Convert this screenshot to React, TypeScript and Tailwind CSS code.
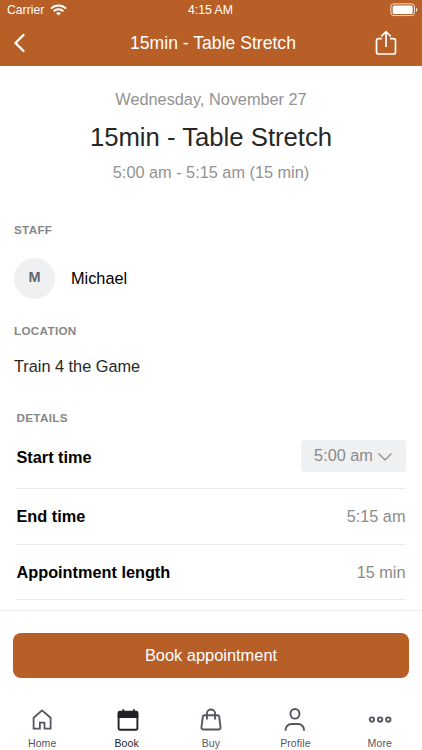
import type { ReactNode } from "react"

const details = [
  { label: "End time", value: "5:15 am" },
  { label: "Appointment length", value: "15 min" },
]

function WifiIcon() {
  return (
    <svg width="17" height="12" viewBox="0 0 17 12" fill="none" stroke="white" strokeWidth="2">
      <path d="M1 4.6C5 .4 12 .4 16 4.6" />
      <path d="M3.7 7.3C6.3 4.6 10.7 4.6 13.3 7.3" />
      <path d="M8.5 11.6 6 9.1c1.4-1.3 3.6-1.3 5 0z" fill="white" stroke="none" />
    </svg>
  )
}

function BatteryIcon() {
  return (
    <svg width="28" height="14" viewBox="0 0 28 14" fill="none">
      <rect x=".9" y=".8" width="23.6" height="11.8" rx="3" stroke="white" strokeOpacity=".8" />
      <rect x="2.7" y="2.5" width="20" height="8.4" rx="1.5" fill="white" />
      <path d="M26 4.5c1.8.8 1.8 3.8 0 4.6z" fill="white" fillOpacity=".8" />
    </svg>
  )
}

function ShareIcon() {
  return (
    <svg width="22" height="26" viewBox="0 0 22 26" fill="none" stroke="white" strokeWidth="1.7">
      <path d="M7 8.7H3.5a2 2 0 0 0-2 2V22a2 2 0 0 0 2 2h15a2 2 0 0 0 2-2V10.7a2 2 0 0 0-2-2H15" />
      <path d="M11 17V1.6M6.3 6.3 11 1.6l4.7 4.7" />
    </svg>
  )
}

function HomeIcon() {
  return (
    <svg width="24" height="26" viewBox="0 0 24 26" fill="none" stroke="#55555f" strokeWidth="1.8">
      <path d="M3.6 10.7 12 3.4l8.6 7.3v10.9h-6.100v-5.900h-4.600v5.900H3.600z" />
    </svg>
  )
}

function BookIcon() {
  return (
    <svg width="24" height="26" viewBox="0 0 24 26" fill="none">
      <rect x="3.6" y="5" width="18.8" height="17.8" rx="1.8" stroke="#222129" strokeWidth="1.9" />
      <path d="M2.700 11V6q0-2.200 2-2.200h16.600q2 0 2 2.200v5zM7.400 2.200h1.800V5H7.400zM18 2.200h1.800V5H18z" fill="#222129" />
    </svg>
  )
}

function BuyIcon() {
  return (
    <svg width="24" height="26" viewBox="0 0 24 26" fill="none" stroke="#55555f" strokeWidth="1.9">
      <path d="M5.500 8.300h13q1.500 0 1.700 1.400l1.300 10.400q.3 2.400-2 2.400h-15q-2.300 0-2-2.400L3.800 9.700q.2-1.400 1.700-1.400z" />
      <path d="M7.900 12.400V6.600a4.100 4.100 0 0 1 8.200 0v5.800" />
    </svg>
  )
}

function ProfileIcon() {
  return (
    <svg width="24" height="26" viewBox="0 0 24 26" fill="none" stroke="#55555f" strokeWidth="1.9">
      <rect x="7.500" y="2" width="8.900" height="9.600" rx="4.400" />
      <path d="M2.600 23.700v-.9c0-3 2.600-5.800 5.800-5.800h6.800c3.200 0 5.800 2.800 5.800 5.800v.9" />
    </svg>
  )
}

function MoreIcon() {
  return (
    <svg width="24" height="26" viewBox="0 0 24 26" fill="none" stroke="#55555f" strokeWidth="1.9">
      <circle cx="3.900" cy="12.600" r="2.200" />
      <circle cx="12.100" cy="12.600" r="2.200" />
      <circle cx="20.300" cy="12.600" r="2.200" />
    </svg>
  )
}

function Tab({ label, active, children }: { label: string; active?: boolean; children: ReactNode }) {
  return (
    <button className="flex w-[84.4px] flex-col items-center">
      {children}
      <span className={`mt-[4px] text-[10.5px] leading-3 tracking-[0.1px] ${active ? "text-[#222129]" : "text-[#55555f]"}`}>
        {label}
      </span>
    </button>
  )
}

export default function App() {
  return (
    <main className="flex h-[750px] w-[422px] flex-col overflow-hidden bg-white font-['Liberation_Sans',sans-serif] text-[#272727]">
      <header className="h-[66px] shrink-0 bg-[#b85e27] text-white">
        <div className="grid h-5 grid-cols-3 items-center pr-1 pl-[7px]">
          <div className="flex items-center gap-[6px]">
            <span className="text-[12.2px]">Carrier</span>
            <WifiIcon />
          </div>
          <span className="-ml-1 text-center text-[12.3px]">4:15 AM</span>
          <div className="flex justify-end">
            <BatteryIcon />
          </div>
        </div>
        <div className="flex h-[46px] items-center justify-between pr-[25px] pl-[13px]">
          <svg width="22" height="22" viewBox="0 0 22 22" fill="none" stroke="white" strokeWidth="2.3" strokeLinecap="round">
            <path d="M10.500 3 2.500 11l8 8" />
          </svg>
          <h1 className="pl-4 text-[17.6px] leading-5">15min - Table Stretch</h1>
          <ShareIcon />
        </div>
      </header>

      <section className="flex h-[156px] shrink-0 flex-col items-center pt-[23px]">
        <p className="text-[16.3px] leading-5 text-[#929292]">Wednesday, November 27</p>
        <h2 className="mt-3 text-[25.7px] leading-8">15min - Table Stretch</h2>
        <p className="mt-[9px] text-[16.3px] leading-5 text-[#929292]">5:00 am - 5:15 am (15 min)</p>
      </section>

      <section className="shrink-0 px-[14px]">
        <h3 className="text-[11.7px] leading-4 font-bold tracking-[0.3px] text-[#878787]">STAFF</h3>
        <div className="mt-5 flex h-10 items-center gap-4">
          <span className="flex size-[41px] items-center justify-center rounded-full bg-[#eff0f2] text-[14.5px] font-bold text-[#65676d]">M</span>
          <span className="text-[16.3px] text-black">Michael</span>
        </div>
        <h3 className="mt-[25px] text-[11.7px] leading-4 font-bold tracking-[0.3px] text-[#878787]">LOCATION</h3>
        <p className="mt-[17px] text-[16.3px] leading-5">Train 4 the Game</p>
      </section>

      <section className="mx-4 mt-[34px] h-[200px] shrink-0 text-[16.3px]">
        <h3 className="pl-[.5px] text-[11.7px] leading-4 font-bold tracking-[0.3px] text-[#878787]">DETAILS</h3>
        <div className="flex h-[63px] items-center justify-between border-b border-[#ececec]">
          <span className="pl-[.5px] font-bold text-black">Start time</span>
          <button className="mb-[3px] flex h-8 w-[105px] items-center justify-center gap-1 rounded bg-[#eff0f2] text-[#8a8a8a]">
            5:00 am
            <svg width="16" height="16" viewBox="0 0 16 16" fill="none" stroke="currentColor" strokeWidth="1.2">
              <path d="m1.500 5.500 6.500 6.500 6.500-6.500" />
            </svg>
          </button>
        </div>
        {details.map((item) => (
          <div key={item.label} className="flex h-[55.5px] items-center justify-between border-b border-[#ececec]">
            <span className="pl-[.5px] font-bold text-black">{item.label}</span>
            <span className="pr-[.5px] text-[#8a8a8a]">{item.value}</span>
          </div>
        ))}
      </section>

      <footer className="flex-1 border-t border-[#ececec] pt-[22px]">
        <button className="mx-[13px] h-[45px] w-[396px] rounded-lg bg-[#b85e27] text-[16.4px] text-white">
          Book appointment
        </button>
        <nav className="mt-[29px] flex">
          <Tab label="Home"><HomeIcon /></Tab>
          <Tab label="Book" active><BookIcon /></Tab>
          <Tab label="Buy"><BuyIcon /></Tab>
          <Tab label="Profile"><ProfileIcon /></Tab>
          <Tab label="More"><MoreIcon /></Tab>
        </nav>
      </footer>
    </main>
  )
}
